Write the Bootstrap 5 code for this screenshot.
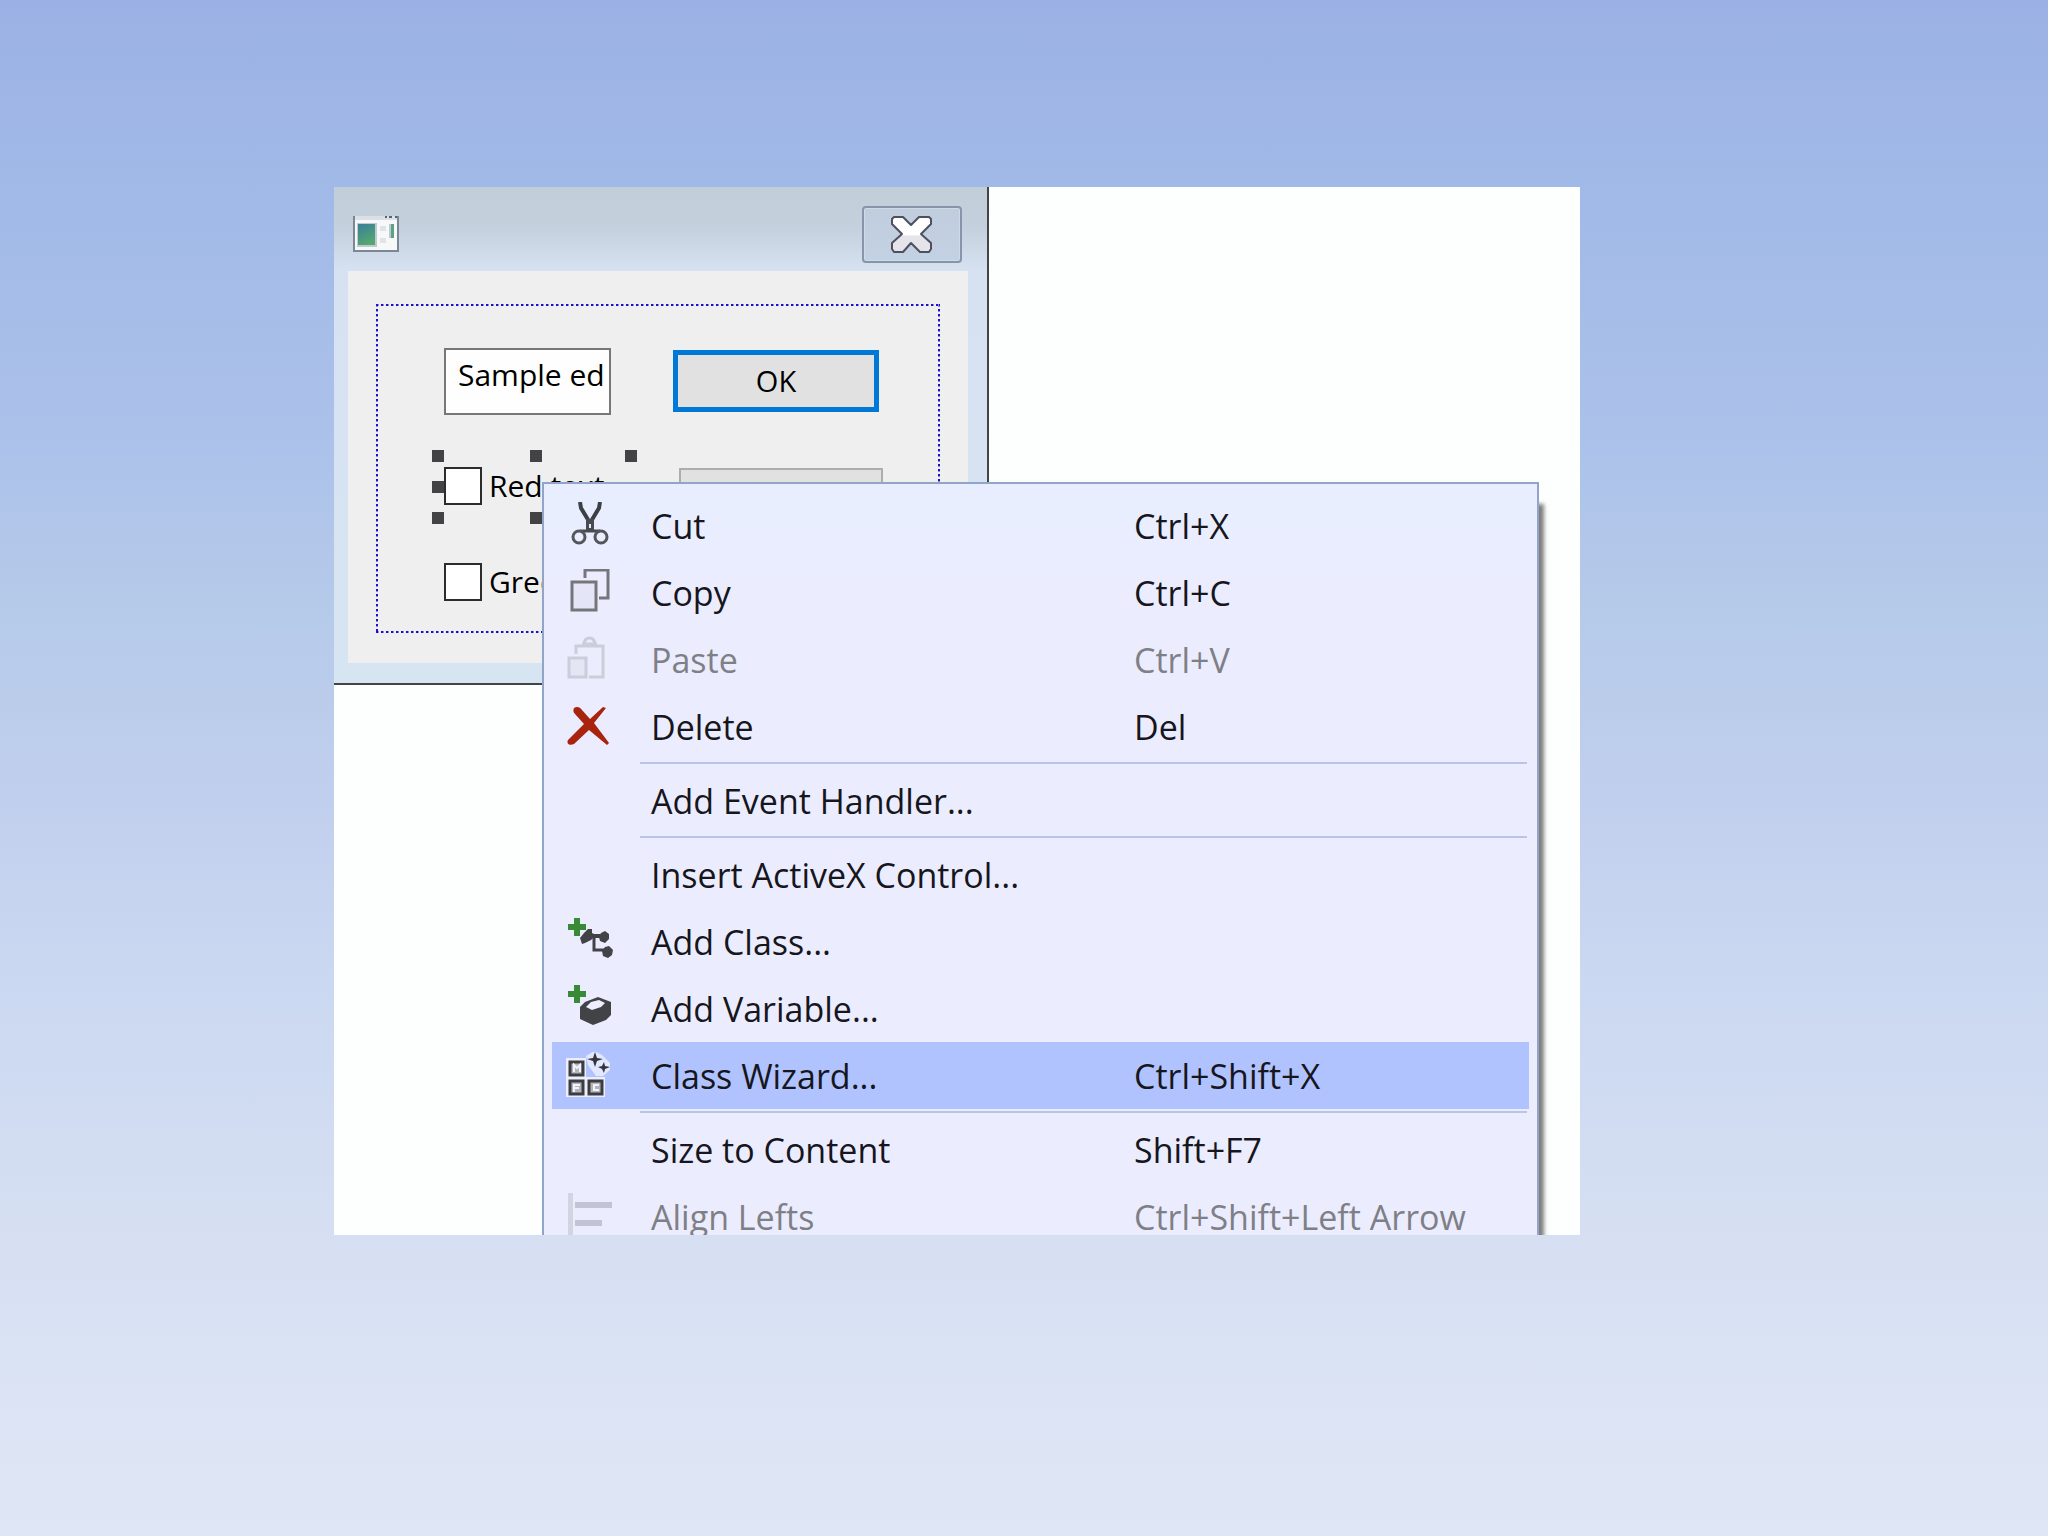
<!DOCTYPE html>
<html lang="en">
<head>
<meta charset="utf-8">
<meta name="viewport" content="width=device-width, initial-scale=1">
<title>Dialog editor context menu</title>
<link href="https://cdn.jsdelivr.net/npm/bootstrap@5.3.0/dist/css/bootstrap.min.css" rel="stylesheet">
<style>
  body {
    font-family: "Open Sans", "Noto Sans", sans-serif;
    color: #111;
    background: linear-gradient(#9bb1e5 0%, #a1b9e7 12%, #abc1ea 28%, #b6cae9 40%, #c1cfee 52%, #cad8f1 64%, #d6dff2 80%, #dfe7f6 100%);
  }
  .stage { padding: 187px 22% 0 334px; }
  .editor-surface { max-width: 1246px; height: 1048px; background: #fdfefe; }
  .dlg {
    width: 655px;
    padding: 0 19px 20px 14px;
    border: 0 solid #444;
    border-width: 0 2px 2px 0;
    background: linear-gradient(#c1ced8 0, #c4d0dd 40px, #d6e2f1 84px, #d7e4f2 100%);
  }
  .dlg-title { height: 84px; padding: 19px 6px 0 5px; }
  .app-icon { width: 46px; height: 36px; margin-top: 10px; }
  .close-btn {
    width: 100px; height: 57px; padding: 0;
    border: 2px solid #8795ab; border-radius: 4px;
    background: linear-gradient(#c0cddd, #c3d1e4);
    box-shadow: inset 0 0 0 1px #cfdae8;
  }
  .dlg-body { padding: 33px 28px 30px; background: #f0eff0; }
  .guide {
    --dots-x: repeating-linear-gradient(90deg, #1d0fd0 0 2px, #8f8ae0 2px 3px, transparent 3px 5px);
    --dots-y: repeating-linear-gradient(#1d0fd0 0 2px, #8f8ae0 2px 3px, transparent 3px 5px);
    height: 329px;
    padding: 44px 0 0 68px;
    background:
      var(--dots-x) top / 100% 2px no-repeat, var(--dots-x) bottom / 100% 2px no-repeat,
      var(--dots-y) left / 2px 100% no-repeat, var(--dots-y) right / 2px 100% no-repeat;
  }
  .left-col { width: 229px; }
  .edit-box {
    width: 167px; height: 67px; padding: 0 2px 14px 12px;
    border: 2px solid #777; background: #fefefe; font-size: 30px; color: #000;
  }
  .check-line { height: 38px; gap: 7px; font-size: 30px; line-height: 40px; color: #000; white-space: nowrap; }
  .check-first { margin-top: 52px; }
  .check-next { margin-top: 58px; }
  .tick { appearance: none; width: 38px; height: 38px; margin: 0; border: 2px solid #2c2c2c; background: #fff; }
  .grip { position: absolute; width: 12px; height: 12px; background: #434244; }
  .gx1 { left: -12px; } .gx2 { left: 86px; } .gx3 { left: 181px; }
  .gy1 { top: -17px; } .gy2 { top: 14px; } .gy3 { top: 45px; }
  .push {
    width: 206px; height: 62px; padding: 0; border: 2px solid #adadad;
    background: #e1e1e1; font-size: 29px; color: #000;
  }
  .push-default { margin-top: 2px; border: 5px solid #0078d7; }
  .push-second { margin: 56px 0 0 6px; width: 204px; }
  .ctx {
    position: absolute; left: 208px; top: 295px; width: 997px;
    padding: 8px;
    border: 2px solid #93a4c9;
    background: linear-gradient(#e8eeff, #ebedff 100px);
    box-shadow: 5px 22px 4px rgba(0, 0, 0, .5);
  }
  .cmd {
    display: grid; grid-template-columns: 99px 483px 1fr; align-items: center;
    width: 100%; height: 67px; padding: 0; border: 0; background: transparent;
    font-size: 34px; line-height: 48px; color: #16161c; text-align: left; white-space: nowrap;
  }
  .cmd:disabled { color: #7f7f86; }
  .cmd-hot { background: #b0c3ff; }
  .cmd-icon { width: 48px; height: 48px; margin-left: 14px; }
  .rule { height: 7px; margin: 0 2px 0 88px; padding-top: 2px; }
  .rule::before { content: ""; display: block; height: 2px; background: #b9c4e8; }
</style>
</head>
<body class="min-vh-100">
<main class="stage">
  <div class="editor-surface position-relative overflow-hidden">
    <section class="dlg" aria-label="Dialog">
      <header class="dlg-title d-flex justify-content-between align-items-start">
        <svg class="app-icon" viewBox="0 0 46 36" aria-hidden="true">
          <defs><linearGradient id="scr" x1="0" y1="0" x2=".4" y2="1"><stop offset="0" stop-color="#377f9b"/><stop offset="1" stop-color="#55a66f"/></linearGradient></defs>
          <path d="M1 0h44v35H1z" fill="#f7f8fa"/>
          <path d="M2 0h42v4H2z" fill="#dcdfe6"/>
          <path d="M1 0v35h44V0" fill="none" stroke="#7c8794" stroke-width="2"/>
          <path d="M32 1h2M36 1h3M42 1h2" stroke="#56627c" stroke-width="2"/>
          <path d="M4 7h20v24H4z" fill="#c1c8d2"/>
          <path d="M5 8h17v21H5z" fill="url(#scr)"/>
          <path d="M27 10h6v5h-6zM27 22h6v5h-6z" fill="#e2e3e6"/>
          <path d="M36 8h5v14h-5z" fill="#bfc9d0"/><path d="M38 8h3v14h-3z" fill="#5ba285"/>
        </svg>
        <button class="close-btn d-flex justify-content-center align-items-center" type="button" aria-label="Close">
          <svg width="44" height="40" viewBox="0 0 44 40" aria-hidden="true">
            <defs><linearGradient id="xg" x1="0" y1="0" x2="0" y2="1"><stop offset=".5" stop-color="#fff"/><stop offset=".55" stop-color="#e4e4ea"/></linearGradient></defs>
            <path d="M4 2h9l8 8 8-8h10l2 2v5l-10 10 10 9v6l-2 3H30l-9-9-8 9H4l-2-3v-6l10-9L2 9V4z" fill="url(#xg)" stroke="#4f505f" stroke-width="2" stroke-linejoin="round"/>
          </svg>
        </button>
      </header>
      <div class="dlg-body">
        <div class="guide d-flex align-items-start">
          <div class="left-col">
            <input class="edit-box d-block" type="text" value="Sample ed" aria-label="Sample edit box">
            <div class="check-line check-first d-flex align-items-center position-relative">
              <input class="tick" type="checkbox" id="redText"><label for="redText">Red text</label>
              <span class="grip gx1 gy1"></span><span class="grip gx2 gy1"></span><span class="grip gx3 gy1"></span>
              <span class="grip gx1 gy2"></span>
              <span class="grip gx1 gy3"></span><span class="grip gx2 gy3"></span><span class="grip gx3 gy3"></span>
            </div>
            <div class="check-line check-next d-flex align-items-center">
              <input class="tick" type="checkbox" id="greenText"><label for="greenText">Green text</label>
            </div>
          </div>
          <div class="d-flex flex-column">
            <button class="push push-default" type="button">OK</button>
            <button class="push push-second" type="button" aria-label="Second button"></button>
          </div>
        </div>
      </div>
    </section>

    <div class="ctx" role="menu">
      <button class="cmd" role="menuitem" type="button">
        <svg class="cmd-icon" viewBox="0 0 48 48" aria-hidden="true">
          <path d="M14 0l1 6 9 15M34 0l-1 6-9 15" stroke="#3e3f43" stroke-width="4" fill="none"/>
          <path d="M20 17h8v12h-8z" fill="#4a4b50"/><path d="M23 22h2v4h-2z" fill="#e9ecff"/>
          <path d="M14 29h20" stroke="#4a4b50" stroke-width="3"/>
          <circle cx="13" cy="35" r="6" fill="none" stroke="#55565b" stroke-width="3"/>
          <circle cx="35" cy="35" r="6" fill="none" stroke="#55565b" stroke-width="3"/>
        </svg><span>Cut</span><span>Ctrl+X</span></button>
      <button class="cmd" role="menuitem" type="button">
        <svg class="cmd-icon" viewBox="0 0 48 48" fill="none" stroke="#75767b" stroke-width="3" aria-hidden="true">
          <path d="M6 13h24v28H6z" fill="#e4e6f7"/><path d="M19 9V1h23v28h-9"/>
        </svg><span>Copy</span><span>Ctrl+C</span></button>
      <button class="cmd" role="menuitem" type="button" disabled>
        <svg class="cmd-icon" viewBox="0 0 48 48" fill="none" stroke="#cccddb" stroke-width="3" aria-hidden="true">
          <path d="M3 22h17v19H3z" fill="#e4e6f5"/><path d="M10 18v-8h27v31H23"/><path d="M16 8h15M18 8c1-8 10-8 11 0"/>
        </svg><span>Paste</span><span>Ctrl+V</span></button>
      <button class="cmd" role="menuitem" type="button">
        <svg class="cmd-icon" viewBox="0 0 48 48" aria-hidden="true">
          <path d="M8 5c3-2 6-1 8 2l8 9L37 4l3 1-12 15 15 20-2 2-18-15L8 41c-4 2-8 0-6-4l16-16-9-10C7 9 7 7 8 5z" fill="#a8240f"/>
        </svg><span>Delete</span><span>Del</span></button>
      <div class="rule" role="separator"></div>
      <button class="cmd" role="menuitem" type="button"><span></span><span>Add Event Handler...</span></button>
      <div class="rule" role="separator"></div>
      <button class="cmd" role="menuitem" type="button"><span></span><span>Insert ActiveX Control...</span></button>
      <button class="cmd" role="menuitem" type="button">
        <svg class="cmd-icon" viewBox="0 0 48 48" aria-hidden="true">
          <path d="M8 0h6v6h6v6h-6v6H8v-6H2V6h6z" fill="#388a34"/>
          <path d="M14 20l4-5 4-4h4v4l4 2-5 5-6 3-3 1zM33 19l2-4 4-2 4 3v5l-4 4-5-2zM36 33l3-4 4-1 4 4-1 5-4 3-5-2z" fill="#424347"/>
          <path d="M24 18h12" fill="none" stroke="#424347" stroke-width="4"/>
          <path d="M28 19v13h11" fill="none" stroke="#424347" stroke-width="3"/>
        </svg><span>Add Class...</span></button>
      <button class="cmd" role="menuitem" type="button">
        <svg class="cmd-icon" viewBox="0 0 48 48" aria-hidden="true">
          <path d="M8 0h6v6h6v6h-6v6H8v-6H2V6h6z" fill="#388a34"/>
          <path d="M14 22l5-5 13-5 13 5v13l-5 5-13 5-13-6z" fill="#424347"/>
          <path d="M20 22l5-5 8-2 6 3-4 4-9 3z" fill="#eef0ff"/>
        </svg><span>Add Variable...</span></button>
      <button class="cmd cmd-hot" role="menuitem" type="button">
        <svg class="cmd-icon" viewBox="0 0 48 48" aria-hidden="true">
          <path d="M0 6h20v19h19v20H0z" fill="#eceefb"/>
          <path d="M20 4l8-5 8 4 8 8v7l-7 6h-7l-8-11z" fill="#e2e8ff"/>
          <g fill="#b4b5ba" stroke="#3c3d42" stroke-width="3"><path d="M4 10h13v13H4zM4 29h13v13H4zM23 29h13v13H23z"/></g>
          <path d="M8 20v-7l3 3 3-3v7M8 40v-7h6M8 36h5M33 33h-5v5h5" fill="none" stroke="#f2f3fa" stroke-width="2"/>
          <path d="M29 0l2 6 6 1-6 2-2 6-2-6-6-2 6-1zM38 10l1 4 5 1-5 2-1 4-2-4-4-2 4-1z" fill="#35363b"/>
        </svg><span>Class Wizard...</span><span>Ctrl+Shift+X</span></button>
      <div class="rule" role="separator"></div>
      <button class="cmd" role="menuitem" type="button"><span></span><span>Size to Content</span><span>Shift+F7</span></button>
      <button class="cmd" role="menuitem" type="button" disabled>
        <svg class="cmd-icon" viewBox="0 0 48 48" aria-hidden="true">
          <path d="M2 0h5v48H2z" fill="#d3d4e2"/><path d="M9 9h37v6H9zM9 27h27v6H9z" fill="#c3c4d3"/>
        </svg><span>Align Lefts</span><span>Ctrl+Shift+Left Arrow</span></button>
    </div>
  </div>
</main>
<script src="https://cdn.jsdelivr.net/npm/bootstrap@5.3.0/dist/js/bootstrap.bundle.min.js"></script>
</body>
</html>
